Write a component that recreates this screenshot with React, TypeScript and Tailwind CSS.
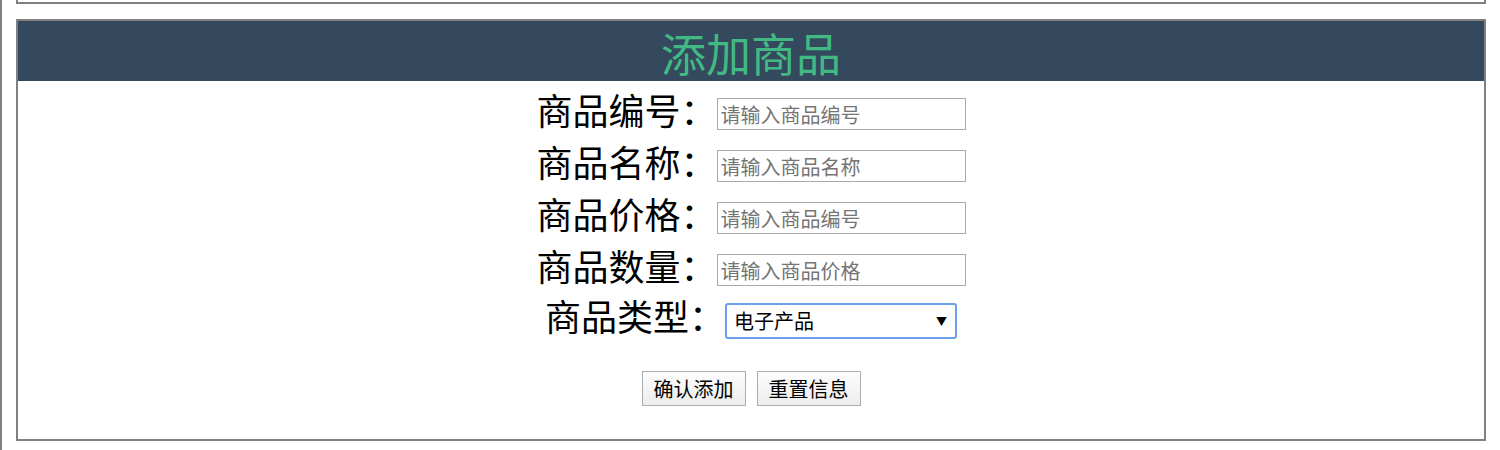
import React from "react";

const font = { fontFamily: '"Noto Sans CJK SC", "Microsoft YaHei", sans-serif' };

function Row({ label, placeholder }: { label: string; placeholder: string }) {
  return (
    <div className="flex h-[52px] items-center justify-center">
      <span className="mb-[10px] text-[36px] leading-[40px] text-black whitespace-nowrap">{label}</span>
      <input
        type="text"
        placeholder={placeholder}
        className="h-[32px] w-[249px] border border-[#a9a9a9] bg-white px-[3px] text-[20px] text-black outline-none placeholder:text-[#757575]"
        style={font}
      />
    </div>
  );
}

export default function App() {
  return (
    <div className="min-h-[450px] w-full border-l-2 border-[#808080] bg-white" style={font}>
      <div className="mx-[14px] h-[4px] border-x-2 border-b-2 border-[#808080]" />
      <div className="mx-[14px] mt-[15px] border-2 border-[#808080] pb-[33px]">
        <div className="flex h-[60px] items-center justify-center bg-[#34495e]">
          <h1 className="mt-[3px] text-[45px] font-normal leading-[60px] text-[#42b983]">添加商品</h1>
        </div>
        <div className="pt-[7px]">
          <Row label="商品编号：" placeholder="请输入商品编号" />
          <Row label="商品名称：" placeholder="请输入商品名称" />
          <Row label="商品价格：" placeholder="请输入商品编号" />
          <Row label="商品数量：" placeholder="请输入商品价格" />
          <div className="flex h-[50px] items-center justify-center">
            <span className="mb-[12px] text-[36px] leading-[40px] text-black whitespace-nowrap">商品类型：</span>
            <div className="relative h-[36px] w-[232px]">
              <select
                className="h-full w-full appearance-none rounded-[3px] border-2 border-[#6d9eeb] bg-white pl-[7px] text-[20px] text-black outline-none"
                style={font}
                defaultValue="电子产品"
              >
                <option>电子产品</option>
                <option>生活用品</option>
                <option>食品</option>
              </select>
              <span className="pointer-events-none absolute right-[10px] top-[8px] text-[11px] leading-[20px] text-black">▼</span>
            </div>
          </div>
        </div>
        <div className="mt-[25px] flex justify-center gap-[11px]">
          <button className="h-[35px] w-[104px] border border-[#adadad] bg-gradient-to-b from-[#fdfdfd] to-[#ececec] text-[20px] leading-[33px] text-black" style={font}>确认添加</button>
          <button className="h-[35px] w-[104px] border border-[#adadad] bg-gradient-to-b from-[#fdfdfd] to-[#ececec] text-[20px] leading-[33px] text-black" style={font}>重置信息</button>
        </div>
      </div>
    </div>
  );
}
